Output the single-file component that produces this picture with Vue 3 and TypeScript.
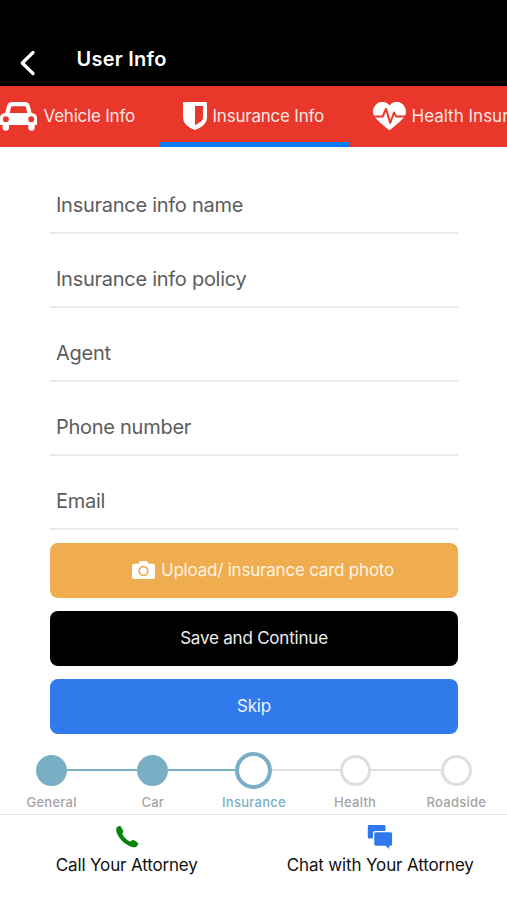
<script setup lang="ts">
import { ref } from 'vue'

type TabId = 'vehicle' | 'insurance' | 'health'
interface Tab { id: TabId; label: string }
interface Step { label: string; state: 'done' | 'active' | 'todo' }

const tabs: Tab[] = [
  { id: 'vehicle', label: 'Vehicle Info' },
  { id: 'insurance', label: 'Insurance Info' },
  { id: 'health', label: 'Health Insurance' },
]
const activeTab = ref<TabId>('insurance')

const fields = ref([
  { label: 'Insurance info name', value: '' },
  { label: 'Insurance info policy', value: '' },
  { label: 'Agent', value: '' },
  { label: 'Phone number', value: '' },
  { label: 'Email', value: '' },
])

const steps: Step[] = [
  { label: 'General', state: 'done' },
  { label: 'Car', state: 'done' },
  { label: 'Insurance', state: 'active' },
  { label: 'Health', state: 'todo' },
  { label: 'Roadside', state: 'todo' },
]
</script>

<template>
  <div class="screen">
    <header class="header">
      <button class="back" aria-label="Back">
        <svg width="17" height="26" viewBox="0 0 17 26"><path d="M14 2.500 3.300 13 14 23.500" fill="none" stroke="#fff" stroke-width="3.300" stroke-linecap="round" stroke-linejoin="round" /></svg>
      </button>
      <h1 class="title">User Info</h1>
    </header>

    <nav class="tabs">
      <button v-for="tab in tabs" :key="tab.id" class="tab" :class="[tab.id, { selected: tab.id === activeTab }]" @click="activeTab = tab.id">
        <svg v-if="tab.id === 'vehicle'" class="tab-icon" width="38" height="30" viewBox="0 0 38 30">
          <path fill="#fff" fill-rule="evenodd" d="M12 1h13c2.600 0 4.200 1.200 4.800 3.700l1.900 7.400c3.300.3 5.300 2.300 5.300 5V23c0 .7-.4 1-1 1h-1.300v2.500a3.200 3.200 0 0 1-6.400 0V24H9v2.500a3.200 3.200 0 0 1-6.400 0V24H1c-.6 0-1-.4-1-1v-5.900c0-2.700 1.900-4.700 5.200-5l1.900-7.400C7.700 2.200 9.400 1 12 1Zm.2 4.200c-.6 0-.9.200-1.100.8L9.600 12h17.800l-1.500-6c-.2-.6-.5-.8-1.100-.8ZM5.900 15.200a3 3 0 1 0 0 6 3 3 0 0 0 0-6Zm25.300 0a3 3 0 1 0 0 6 3 3 0 0 0 0-6Z" />
        </svg>
        <svg v-else-if="tab.id === 'insurance'" class="tab-icon" width="24" height="28" viewBox="0 0 24 28">
          <path fill="#fff" fill-rule="evenodd" d="M1.200 0h21.600c.7 0 1.200.5 1.200 1.200v14.300c0 5.600-4.700 9.500-11.400 12.300-.4.200-.8.200-1.200 0C4.700 25 0 21.100 0 15.500V1.200C0 .5.500 0 1.200 0ZM12 4v19.200c5.300-2.700 8-4.700 8-8.200V4Z" />
        </svg>
        <svg v-else class="tab-icon" width="33" height="28" viewBox="0 0 33 28">
          <path fill="#fff" d="M16.500 3.600C13.700-.7 8-1.200 4.200 1.500.5 4.300-.9 8.700.6 13c1.300 3.700 11.500 11.800 15.200 14.700.5.400.9.400 1.400 0C20.900 24.800 31.100 16.700 32.400 13c1.500-4.300.1-8.700-3.600-11.500-3.800-2.700-9.500-2.200-12.300 2.100Z" />
          <path d="M0 14.500h9.700L13 6.800l4.200 14 3.800-10.300 2.200 4H33" fill="none" stroke="#e9382b" stroke-width="2" stroke-linejoin="round" />
        </svg>
        <span>{{ tab.label }}</span>
      </button>
    </nav>

    <main class="content">
      <form class="form" @submit.prevent>
        <input v-for="field in fields" :key="field.label" v-model="field.value" class="field" :placeholder="field.label" />
        <div class="actions">
          <button class="action upload" type="button">
            <svg width="23" height="18" viewBox="0 0 23 18">
              <path fill="#fff" fill-rule="evenodd" d="M7.500.7C7.700.2 8 0 8.500 0h6c.5 0 .8.200 1 .7l.9 2H21c1.300 0 2 .7 2 2V16c0 1.300-.7 2-2 2H2c-1.300 0-2-.7-2-2V4.700c0-1.300.7-2 2-2h4.600ZM11.500 4.800a5.200 5.200 0 1 0 0 10.400 5.200 5.200 0 0 0 0-10.400Zm0 1.700a3.500 3.500 0 1 1 0 7 3.500 3.500 0 0 1 0-7Z" />
            </svg>
            <span>Upload/ insurance card photo</span>
          </button>
          <button class="action save" type="submit"><span>Save and Continue</span></button>
          <button class="action skip" type="button"><span>Skip</span></button>
        </div>
      </form>

      <ol class="stepper">
        <li v-for="step in steps" :key="step.label" class="step" :class="step.state">
          <div class="track"><i class="line before"></i><i class="dot"></i><i class="line after"></i></div>
          <span class="step-label">{{ step.label }}</span>
        </li>
      </ol>
    </main>

    <footer class="footer">
      <button class="contact call">
        <svg width="24" height="24" viewBox="0 0 24 24"><path fill="#078307" d="M1.200 4C1.300 2.800 2.500 1.700 3.900 1.100c.8-.3 1.400-.2 1.900.5l2.200 3.600c.4.700.4 1.300.1 2l-.6 1.200c-.2.500-.2.900.1 1.400 1.700 2.700 3.900 4.900 6.800 6.500.5.300.9.200 1.300-.1l1.400-1c.7-.4 1.300-.4 1.900 0l3.500 2.200c.7.500.9 1.100.6 1.900-.6 1.600-1.700 2.700-3 3-1.500.3-3.800-.4-5.600-1.400C8.300 18.300 3.600 13 1.600 7.300 1.200 6.100 1.100 5 1.200 4Z" /></svg>
        <span>Call Your Attorney</span>
      </button>
      <button class="contact chat">
        <svg width="26" height="24" viewBox="0 0 26 24">
          <path fill="#2f78ed" d="M2.300 0h14.600c1.100 0 1.600.6 1.600 1.600V6H8.500C6.800 6 6 6.800 6 8.500v5H2.300c-1 0-1.500-.6-1.500-1.600V1.600C.8.600 1.300 0 2.300 0Z" />
          <path fill="#2f78ed" d="M9 7.200h14.400c1.100 0 1.700.6 1.700 1.700v10c0 1.200-.6 1.800-1.700 1.800h-1.200V24l-3.700-3.300H9c-1.100 0-1.700-.6-1.700-1.800v-10c0-1.100.6-1.700 1.700-1.700Z" />
        </svg>
        <span>Chat with Your Attorney</span>
      </button>
    </footer>
  </div>
</template>

<style>
body { margin: 0; background: #fff; }
</style>

<style scoped>
.screen { box-sizing: border-box; width: 507px; height: 900px; overflow: hidden; display: flex; flex-direction: column; background: #fff; font-family: Inter, "Liberation Sans", sans-serif; }
button { border: 0; padding: 0; background: none; color: inherit; font: inherit; white-space: nowrap; }
.header { box-sizing: border-box; height: 86px; flex: none; display: flex; align-items: flex-start; padding: 45px 0 0 19px; background: #000; color: #fff; }
.back { display: flex; width: 57.500px; padding-top: 5px; }
.title { margin: 0; font-size: 20px; line-height: 28px; font-weight: 600; letter-spacing: .26px; }
.tabs { height: 60.500px; flex: none; display: flex; margin-left: -30px; background: #e9382b; color: #fde8e4; }
.tab { box-sizing: border-box; flex: 0 0 189.500px; display: flex; align-items: center; gap: 6px; border-bottom: 5px solid transparent; font-size: 17px; letter-spacing: -.22px; padding-top: 4px; }
.tab.vehicle { padding-left: 29.500px; }
.tab.insurance { padding-left: 23px; }
.tab.health { padding-left: 24px; gap: 5.500px; letter-spacing: 0; }
.tab.selected { border-bottom-color: #087bf5; }
.tab-icon { flex: none; }
.content { height: 667.500px; flex: none; }
.form { display: flex; flex-direction: column; padding: 13.500px 49px 0 50px; }
.field { box-sizing: border-box; width: 100%; height: 74px; border: 0; border-bottom: 2px solid #ebebeb; padding: 17px 6px 0; background: none; outline: 0; color: #555; font: 400 20px Inter, "Liberation Sans", sans-serif; letter-spacing: -.27px; }
.field::placeholder { color: #5c5c5c; opacity: 1; }
.actions { display: flex; flex-direction: column; gap: 13px; padding-top: 13px; }
.action { box-sizing: border-box; height: 55px; display: flex; align-items: center; justify-content: center; gap: 6px; border-radius: 8px; padding-bottom: 2px; color: #fff; font-size: 17px; letter-spacing: -.21px; }
.upload { background: #efad4f; padding-left: 18px; color: #fff5e6; }
.save { background: #000; color: #eee; }
.skip { background: #307aec; color: #edf4ff; }
.stepper { list-style: none; margin: 0; padding: 18px 0 0 1px; display: grid; grid-template-columns: repeat(5, 101.200px); }
.step { display: flex; flex-direction: column; align-items: center; color: #a4a4a4; }
.track { width: 100%; height: 36px; display: flex; align-items: center; }
.line { flex: 1; height: 2.500px; background: #dedede; }
.dot { box-sizing: border-box; width: 31px; height: 31px; border: 3px solid #dedede; border-radius: 50%; }
.done .dot { background: #7aaec5; border-color: #7aaec5; }
.done .line, .active .before { background: #7aaec5; }
.active .dot { width: 37px; height: 37px; border-color: #7aaec5; border-width: 4px; }
.step:first-child .before, .step:last-child .after { background: transparent; }
.step-label { margin-top: 4.500px; font-size: 13px; line-height: 18px; font-weight: 550; letter-spacing: .26px; }
.active .step-label { color: #7aaec5; }
.footer { flex: 1; display: grid; grid-template-columns: 1fr 1fr; border-top: 1px solid #e7e7e7; }
.contact { display: flex; flex-direction: column; align-items: center; padding-top: 10px; color: #111; font-size: 17px; letter-spacing: -.15px; }
.contact span { margin-top: 5px; line-height: 22px; }
</style>
